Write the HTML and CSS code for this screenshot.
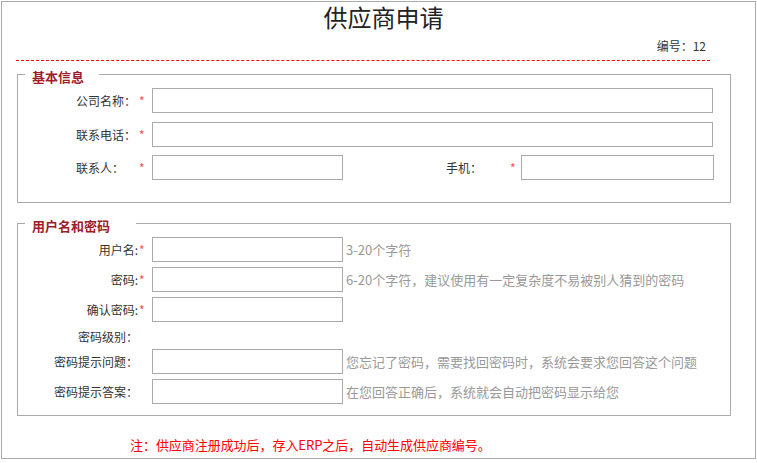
FILE: index.html
```html
<!DOCTYPE html>
<html lang="zh-CN">
<head>
    <meta charset="UTF-8">
    <title>供应商申请</title>
    <link rel="stylesheet" href="styles.css">
</head>
<body>
    <div class="page">
        <h1 class="title">供应商申请</h1>
        <div class="head-line"><span>编号：12</span></div>

        <fieldset class="group group-basic">
            <legend class="legend-basic">基本信息</legend>
            <div class="row">
                <label class="lbl lbl-left">公司名称：</label><span class="star">*</span>
                <input class="inp inp-wide" type="text">
            </div>
            <div class="row">
                <label class="lbl lbl-left">联系电话：</label><span class="star">*</span>
                <input class="inp inp-wide" type="text">
            </div>
            <div class="row row-last">
                <label class="lbl lbl-left">联系人：</label><span class="star">*</span>
                <input class="inp" type="text">
                <label class="lbl-mobile">手机：</label><span class="star star-mobile">*</span>
                <input class="inp inp-mobile" type="text">
            </div>
        </fieldset>

        <fieldset class="group group-account">
            <legend class="legend-account">用户名和密码</legend>
            <div class="row">
                <label class="lbl">用户名:</label><span class="star">*</span>
                <input class="inp" type="text">
                <span class="hint">3-20个字符</span>
            </div>
            <div class="row">
                <label class="lbl">密码:</label><span class="star">*</span>
                <input class="inp" type="password">
                <span class="hint">6-20个字符，建议使用有一定复杂度不易被别人猜到的密码</span>
            </div>
            <div class="row">
                <label class="lbl">确认密码:</label><span class="star">*</span>
                <input class="inp" type="password">
            </div>
            <div class="row row-level">
                <label class="lbl">密码级别：</label>
            </div>
            <div class="row">
                <label class="lbl">密码提示问题：</label><span class="star"></span>
                <input class="inp" type="text">
                <span class="hint">您忘记了密码，需要找回密码时，系统会要求您回答这个问题</span>
            </div>
            <div class="row">
                <label class="lbl">密码提示答案：</label><span class="star"></span>
                <input class="inp" type="text">
                <span class="hint">在您回答正确后，系统就会自动把密码显示给您</span>
            </div>
        </fieldset>

        <p class="note">注：供应商注册成功后，存入ERP之后，自动生成供应商编号。</p>
    </div>
</body>
</html>
```

FILE: styles.css
```css
* {
    box-sizing: border-box;
}

body {
    margin: 0;
    font-family: "Noto Sans CJK SC", "Liberation Sans", sans-serif;
    font-size: 12px;
    color: #333;
    background-color: #fff;
}

.page {
    margin: 1px;
    width: 755px;
    height: 458px;
    border: 1px solid #aaa;
}

.title {
    margin: 0;
    padding-left: 10px;
    text-align: center;
    font-size: 24px;
    font-weight: normal;
    line-height: 30px;
    color: #222;
}

.head-line {
    margin: 0 45px 0 14px;
    padding: 7px 4px 7px 0;
    line-height: 14px;
    text-align: right;
    border-bottom: 1px dashed #f00;
}

.group {
    width: 714px;
    margin: 0 0 0 15px;
    border: 1px solid #aaa;
    min-inline-size: 0;
}

.group-basic {
    margin-top: 3px;
    padding: 4px 0 22px 0;
}

.group-account {
    margin-top: 10px;
    padding: 4px 0 11px 0;
}

legend {
    margin-left: 7px;
    padding: 6px 15px 0 7px;
    font-size: 13px;
    font-weight: bold;
    line-height: 14px;
    color: #a01c2c;
}

.legend-account {
    padding-right: 26px;
}

.group-basic .row + .row {
    margin-top: 9px;
}

.group-basic .row + .row-last {
    margin-top: 8px;
}

.group-account .row + .row {
    margin-top: 5px;
}

.row {
    display: flex;
    align-items: center;
    height: 25px;
}

.row-level {
    height: 17px;
    align-items: flex-end;
    line-height: 14px;
}

.lbl {
    width: 121px;
    padding-right: 1px;
    text-align: right;
    flex-shrink: 0;
}

.lbl-left {
    padding-left: 58px;
    text-align: left;
}

.star {
    width: 13px;
    color: #ff5050;
    flex-shrink: 0;
}

.lbl-mobile {
    width: 64px;
    margin-left: 103px;
    flex-shrink: 0;
}

.star-mobile {
    width: 11px;
}

.inp {
    width: 191px;
    height: 25px;
    margin: 0;
    padding: 0 3px;
    border: 1px solid #aaa;
    background-color: #fff;
    font-family: inherit;
    font-size: 12px;
    outline: none;
    flex-shrink: 0;
}

.inp-wide {
    width: 561px;
}

.inp-mobile {
    width: 193px;
}

.hint {
    margin-left: 3px;
    font-size: 13px;
    color: #999;
    white-space: nowrap;
}

.note {
    margin: 21px 0 0 128px;
    font-size: 13px;
    line-height: 16px;
    letter-spacing: -0.05px;
    color: #f00;
}
```
